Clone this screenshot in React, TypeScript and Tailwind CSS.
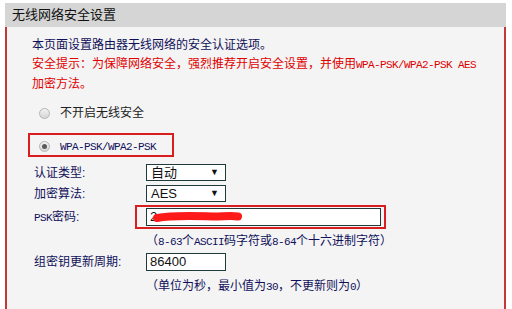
import React from 'react';

const cjk = { fontFamily: '"Liberation Sans", "Noto Sans CJK SC", sans-serif' };
const mono = { fontFamily: '"Liberation Mono", "Noto Sans CJK SC", monospace' };

// Radio drawn with plain divs, the old router page style
const Radio = ({ checked }: { checked?: boolean }) => (
  <span className="flex items-center justify-center w-[11px] h-[11px] rounded-full border border-[#b5b5b5] bg-gradient-to-b from-[#f2f2f2] to-[#d6d6d6]">
    {checked && <span className="w-[5px] h-[5px] rounded-full bg-[#5a5a5a]" />}
  </span>
);

const Select = ({ value }: { value: string }) => (
  <div className="w-[80px] h-[17px] bg-white border border-[#1e3a3a] flex items-center justify-between pl-[4px] pr-[6px] text-[13px] text-[#111]" style={cjk}>
    <span className="leading-none">{value}</span>
    <span className="text-[9px] leading-none">▼</span>
  </div>
);

// ascii bits in the old SimSun look
const A = ({ children }: { children: React.ReactNode }) => (
  <span className="text-[11px] tracking-[-0.6px]" style={mono}>{children}</span>
);

export default function App() {
  return (
    <div className="w-[512px] h-[309px] bg-white pt-[3px] pl-[5px] pr-[6px] overflow-hidden" style={cjk}>
      <div className="h-[24px] bg-[#d5d5d5] flex items-center pl-[7px] text-[13px] text-[#111]">无线网络安全设置</div>
      <div className="h-[282px] bg-[#f4f4f4] border-l-2 border-r-2 border-[#c43838] pl-[25px] pt-[9px] text-[12px]">
        <p className="leading-[19px] text-[#10105a]">本页面设置路由器无线网络的安全认证选项。</p>
        <p className="leading-[19px] text-[#e00000]">
          安全提示：为保障网络安全，强烈推荐开启安全设置，并使用<A>WPA-PSK/WPA2-PSK AES</A>
          <br />
          加密方法。
        </p>

        <div className="mt-[10px] h-[18px] flex items-center">
          <span className="ml-[7px]"><Radio /></span>
          <span className="ml-[10px] text-[#222]">不开启无线安全</span>
        </div>

        <div className="mt-[11px] ml-[-4px] w-[146px] h-[24px] border-2 border-[#d81e1e] flex items-center pt-[3px]">
          <span className="ml-[9px]"><Radio checked /></span>
          <span className="ml-[10px] text-[#10105a]"><A>WPA-PSK/WPA2-PSK</A></span>
        </div>

        <div className="mt-[7px] h-[17px] flex items-center">
          <span className="ml-[2px] w-[112px] text-[#10105a]">认证类型:</span>
          <Select value="自动" />
        </div>
        <div className="mt-[4px] h-[17px] flex items-center">
          <span className="ml-[2px] w-[112px] text-[#10105a]">加密算法:</span>
          <Select value="AES" />
        </div>

        <div className="mt-[3px] h-[24px] flex items-center">
          <span className="ml-[2px] w-[112px] text-[#10105a]">
            <A>PSK</A>密码:
          </span>
          <div className="ml-[-11px] w-[251px] h-[24px] border-2 border-[#d81e1e] pl-[9px] pr-[3px] pt-[1px]">
            <div className="relative h-[18px] bg-white border border-[#1e3a3a] flex items-center pl-[3px] text-[13px] text-[#111]">
              2
              <svg className="absolute left-[6px] top-[3px]" width="90" height="11" viewBox="0 0 90 11">
                <path d="M4 6 C20 3 40 4 60 4.5 C70 4.5 80 3.5 85 4.5" stroke="#ff1a1a" strokeWidth="8" strokeLinecap="round" fill="none" />
              </svg>
            </div>
          </div>
        </div>
        <div className="mt-[3px] ml-[114px] leading-[19px] text-[#10105a]">
          （<A>8-63</A>个<A>ASCII</A>码字符或<A>8-64</A>个十六进制字符）
        </div>

        <div className="mt-[1px] h-[18px] flex items-center">
          <span className="ml-[2px] w-[112px] text-[#10105a]">组密钥更新周期:</span>
          <div className="w-[80px] h-[18px] bg-white border border-[#1e3a3a] flex items-center pl-[3px] text-[13px] text-[#111]">86400</div>
        </div>
        <div className="mt-[6px] ml-[114px] leading-[19px] text-[#10105a]">
          （单位为秒，最小值为<A>30</A>，不更新则为<A>0</A>）
        </div>
      </div>
    </div>
  );
}
